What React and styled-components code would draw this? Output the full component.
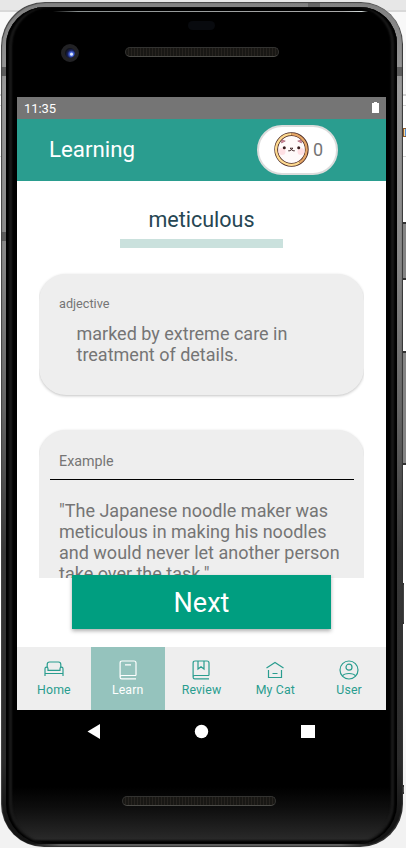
import React from "react";
import styled, { createGlobalStyle } from "styled-components";

const GlobalStyle = createGlobalStyle`
  *, *::before, *::after { box-sizing: border-box; }
  body { margin: 0; overflow: hidden; font-family: Roboto, sans-serif; }
  button { font: inherit; border: 0; margin: 0; padding: 0; cursor: pointer; }
  p, h1, h2, h3 { margin: 0; font-weight: 400; }
`;

const Desktop = styled.div`
  position: relative;
  width: 406px;
  height: 848px;
  overflow: hidden;
  background:
    linear-gradient(#d4d4d4, #d4d4d4) 0 94px / 100% 2px no-repeat,
    linear-gradient(#d9d9d9, #d9d9d9) 0 105px / 100% 1px no-repeat,
    linear-gradient(#d9d9d9, #d9d9d9) 0 156px / 100% 1px no-repeat,
    linear-gradient(#e7e7e7 0 10px, #d8d8d8 10px 12px, #f8f8f8 12px 94px, #fff 94px 700px, #f2f2f2 780px);
`;

const SideKey = styled.i`
  position: absolute;
  right: ${(p) => p.$right || 0}px;
  top: ${(p) => p.$top}px;
  width: 4px;
  height: ${(p) => p.$height}px;
  background: ${(p) => p.$color || "#858585"};
  border-top: 2px solid #333;
  border-bottom: 2px solid #333;
  border-left: 1px solid #aaa;
`;

const DesktopIcon = styled.i`
  position: absolute;
  right: 0;
  top: 128px;
  width: 3px;
  height: 9px;
  border: 1px solid #8a5a2e;
  border-right: 0;
  background: linear-gradient(90deg, #f6d9a0 50%, #4f8fdc 50%);
`;

const PhoneFrame = styled.div`
  position: relative;
  width: 402px;
  height: 845px;
  margin: 2px 0 0 1px;
  padding: 5px 6px 3px 5px;
  border-radius: 44px 42px 43px 43px;
  background:
    linear-gradient(#5c5c5c, #5c5c5c) 0 65px / 5px 9px no-repeat,
    linear-gradient(#5c5c5c, #5c5c5c) 0 230px / 5px 9px no-repeat,
    linear-gradient(#5c5c5c, #5c5c5c) 100% 65px / 6px 9px no-repeat,
    linear-gradient(#666, #666) 307px 1px / 12px 4px no-repeat,
    linear-gradient(90deg, transparent 30px, #606060 60px, #606060 340px, transparent 372px) 0 100% / 100% 3px no-repeat,
    linear-gradient(#808080, #999 10%, #888 30%, #666 48%, #393939 65%, #2b2b2b 90%, #141414 97%);
  box-shadow: inset 1px 1px 1px #444, inset -1px -1px 1px #333;
`;

const PhoneFace = styled.div`
  display: flex;
  flex-direction: column;
  height: 100%;
  padding: 0 11px;
  border-radius: 39px 37px 40px 40px;
  background: linear-gradient(#000 0 780px, #0d0d0d 800px, #202020 822px, #292929 832px, #000 835px);
  box-shadow: inset 3px 0 2px #000, inset 6px 0 2px #1b1b1b, inset -3px 0 2px #000, inset -6px 0 2px #1b1b1b;
`;

const TopBezel = styled.div`
  display: grid;
  grid-template-columns: 1fr 154px 1fr;
  grid-template-rows: 5px 9px 9px 17px 10px;
  flex: 0 0 90px;
`;

const GlassEdge = styled.i`
  grid-area: 1 / 1 / 2 / 4;
  align-self: end;
  height: 1px;
  margin: 0 18px 0 36px;
  background: linear-gradient(90deg, transparent, #8b9191 8%, #aaa 92%, #d5dddc 98%, transparent);
`;

const Sensor = styled.i`
  grid-area: 3 / 2;
  justify-self: center;
  width: 27px;
  border-radius: 5px;
  background: #080a0e;
`;

const Camera = styled.i`
  grid-area: 5 / 1;
  align-self: center;
  width: 18px;
  height: 18px;
  margin: 2px 0 0 44px;
  border-radius: 50%;
  border: 4px solid #222225;
  background: radial-gradient(circle at 65% 62%, #dce7ff 0 1px, #4867dc 2px, #171f58 4px, #10131c 6px);
`;

const Speaker = styled.i`
  grid-area: 5 / 2;
  width: 154px;
  height: 10px;
  border-radius: 5px;
  border: 1px solid #333331;
  border-bottom-color: #4c4c48;
  background: repeating-linear-gradient(90deg, #181714 0 2px, #26231f 2px 3px);
`;

const Screen = styled.main`
  display: flex;
  flex-direction: column;
  width: 369px;
  height: 613px;
  flex: none;
  background: #fff;
`;

const StatusBar = styled.div`
  display: flex;
  align-items: center;
  justify-content: space-between;
  height: 21.5px;
  padding: 1px 7px 0;
  background: #757575;
  color: #fff;
  font-size: 13px;
  letter-spacing: -0.1px;
`;

const Header = styled.header`
  display: flex;
  align-items: center;
  justify-content: space-between;
  height: 62.5px;
  padding: 0 48px 0 32px;
  background: #2a9d8f;
  color: #fff;
`;

const PageTitle = styled.h1`
  padding-bottom: 2px;
  font-size: 22.3px;
  line-height: 26px;
`;

const CoinPill = styled.div`
  display: flex;
  align-items: center;
  gap: 4px;
  width: 81px;
  height: 50px;
  padding-left: 15px;
  border: 2px solid #dcdcdc;
  border-radius: 25px;
  background: #fff;
  color: #757575;
  font-size: 18px;
`;

const Content = styled.section`
  display: flex;
  flex-direction: column;
  align-items: center;
  height: 466px;
`;

const Word = styled.h2`
  width: 163px;
  height: 67px;
  padding-top: 25px;
  border-bottom: 9px solid #cae1dd;
  color: #264653;
  font-size: 21.5px;
  line-height: 27px;
  text-align: center;
`;

const CardList = styled.div`
  display: flex;
  flex-direction: column;
  gap: 35px;
  width: 325px;
  height: 330px;
  padding-top: 25.5px;
  overflow: hidden;
  flex: none;
`;

const Card = styled.article`
  flex: none;
  height: ${(p) => p.$height}px;
  border-radius: 27px;
  background: #eee;
  box-shadow: 0 1px 3px rgba(0, 0, 0, 0.24);
  color: #757575;
`;

const PartOfSpeech = styled.h3`
  padding: 21px 20px 0;
  font-size: 12.7px;
  line-height: 18px;
`;

const ExampleHeading = styled.h3`
  height: 49.5px;
  margin: 0 10px 0 11px;
  padding: 22px 9px 0;
  border-bottom: 1px solid #000;
  font-size: 14.3px;
  line-height: 18px;
`;

const CardText = styled.p`
  padding: ${(p) => p.$pad};
  font-size: 18px;
  line-height: 21.1px;
  white-space: pre-line;
`;

const NextButton = styled.button`
  position: relative;
  flex: none;
  width: 259px;
  height: 54px;
  margin-top: -3px;
  padding-top: 2px;
  background: #009e80;
  box-shadow: 0 2px 4px rgba(0, 0, 0, 0.32);
  color: #fff;
  font-size: 27px;
`;

const TabBar = styled.nav`
  display: grid;
  grid-template-columns: repeat(5, 1fr);
  height: 63px;
  flex: none;
  background: #eee;
`;

const Tab = styled.button`
  display: flex;
  flex-direction: column;
  align-items: center;
  gap: 2px;
  padding-top: 13px;
  background: ${(p) => (p.$active ? "#95c3bd" : "#eee")};
  color: ${(p) => (p.$active ? "#fff" : "#2a9d8f")};
  font-size: 12.3px;
  line-height: 16px;
  letter-spacing: 0.15px;
`;

const SystemNav = styled.div`
  display: grid;
  grid-template-columns: 15px 15px 15px;
  justify-content: center;
  align-items: center;
  column-gap: 92px;
  height: 43px;
  flex: none;
`;

const BottomBezel = styled.div`
  padding: 43px 0 0 105px;
`;

const iconPaths = {
  Home: <><path d="M3.2 7.5V4.5Q3.2 2 5.5 2H14.5Q16.8 2 16.8 4.5V7.5" /><path d="M1 16V8.8Q1 7.2 2.5 7.2T4 8.8V10.3H16V8.8Q16 7.2 17.5 7.2T19 8.8V16M1 13.5H19" /></>,
  Learn: <><path d="M18 15.5H3.8a1.7 1.7 0 0 0 0 3.4H18M2.1 17.2V3q0-2 2-2H16q2 0 2 2v12.5M7 4.9h6" /></>,
  Review: <><path d="M18 15.5H3.8a1.7 1.7 0 0 0 0 3.4H18M2.1 17.2V3q0-2 2-2H16q2 0 2 2v12.5M7 1v8l3-2.2L13 9V1" /></>,
  "My Cat": <><path d="M1.5 8 10 2.5 18.5 8M3.5 10v7.5h13V10M7.5 13.5h5" /></>,
  User: <><circle cx="10" cy="10" r="9" /><circle cx="10" cy="7.2" r="3" /><path d="M3.5 16Q5 13.5 10 13.5T16.5 16" /></>,
};

function TabIcon({ name }) {
  return <svg width="20" height="20" viewBox="0 0 20 20" fill="none" stroke="currentColor" strokeWidth="1.2">{iconPaths[name]}</svg>;
}

function CatCoin() {
  return (
    <svg width="35" height="35" viewBox="0 0 35 35">
      <circle cx="17.5" cy="17.5" r="15.3" fill="#fffafa" stroke="#4a2924" strokeWidth="3.8" />
      <path d="M17.5 2.2a15.3 15.3 0 1 0 8 28.3" fill="none" stroke="#ffdb91" strokeWidth="2.2" />
      <path d="M17.5 2.2a15.3 15.3 0 0 1 8 28.3" fill="none" stroke="#e5a666" strokeWidth="2.2" />
      <path d="m7.5 11 .3-3 3.5 1zM27.5 11l-.3-3-3.5 1z" fill="#d88b9e" stroke="#8c4658" strokeWidth=".5" />
      <circle cx="8" cy="19.5" r="3.5" fill="#ffe0e4" /><circle cx="27" cy="19.5" r="3.5" fill="#ffe0e4" />
      <circle cx="10.3" cy="15.7" r="1.5" fill="#3b2020" /><circle cx="24.7" cy="15.7" r="1.5" fill="#3b2020" />
      <path d="M16 16.2h3l-1.5 1.4zM14.2 18.8q2 .5 3.3-1.2 1.3 1.7 3.3 1.2" fill="none" stroke="#3b2020" strokeWidth=".9" />
    </svg>
  );
}

export default function App() {
  return (
    <Desktop>
      <GlobalStyle />
      <DesktopIcon />
      <SideKey $top={222} $height={58} />
      <SideKey $top={351} $height={114} />
      <SideKey $top={583} $height={41} $right={2} $color="#444" />
      <SideKey $top={785} $height={9} $right={2} $color="#555" />
      <PhoneFrame>
        <PhoneFace>
          <TopBezel><GlassEdge /><Sensor /><Camera /><Speaker /></TopBezel>
          <Screen>
            <StatusBar>
              <span>11:35</span>
              <svg width="7" height="12" viewBox="0 0 7 12"><path d="M2 0h3v1h2v10H0V1h2z" fill="#fff" /></svg>
            </StatusBar>
            <Header>
              <PageTitle>Learning</PageTitle>
              <CoinPill><CatCoin /><span>0</span></CoinPill>
            </Header>
            <Content>
              <Word>meticulous</Word>
              <CardList>
                <Card $height={121.5}>
                  <PartOfSpeech>adjective</PartOfSpeech>
                  <CardText $pad="10px 20px 0 37.5px">{"marked by extreme care in\ntreatment of details."}</CardText>
                </Card>
                <Card $height={190}>
                  <ExampleHeading>Example</ExampleHeading>
                  <CardText $pad="20px 10px 0 20px">{"\"The Japanese noodle maker was\nmeticulous in making his noodles\nand would never let another person\ntake over the task.\""}</CardText>
                </Card>
              </CardList>
              <NextButton>Next</NextButton>
            </Content>
            <TabBar>
              {Object.keys(iconPaths).map((name) => (
                <Tab key={name} $active={name === "Learn"}><TabIcon name={name} />{name}</Tab>
              ))}
            </TabBar>
          </Screen>
          <SystemNav>
            <svg width="15" height="15" viewBox="0 0 15 15"><path d="M13 0v15L.5 7.5z" fill="#fff" /></svg>
            <svg width="15" height="15" viewBox="0 0 15 15"><circle cx="7.5" cy="7.5" r="6.7" fill="#fff" /></svg>
            <svg width="15" height="15" viewBox="0 0 15 15"><path d="M0 1h14v13H0z" fill="#fff" /></svg>
          </SystemNav>
          <BottomBezel><Speaker as="div" /></BottomBezel>
        </PhoneFace>
      </PhoneFrame>
    </Desktop>
  );
}
